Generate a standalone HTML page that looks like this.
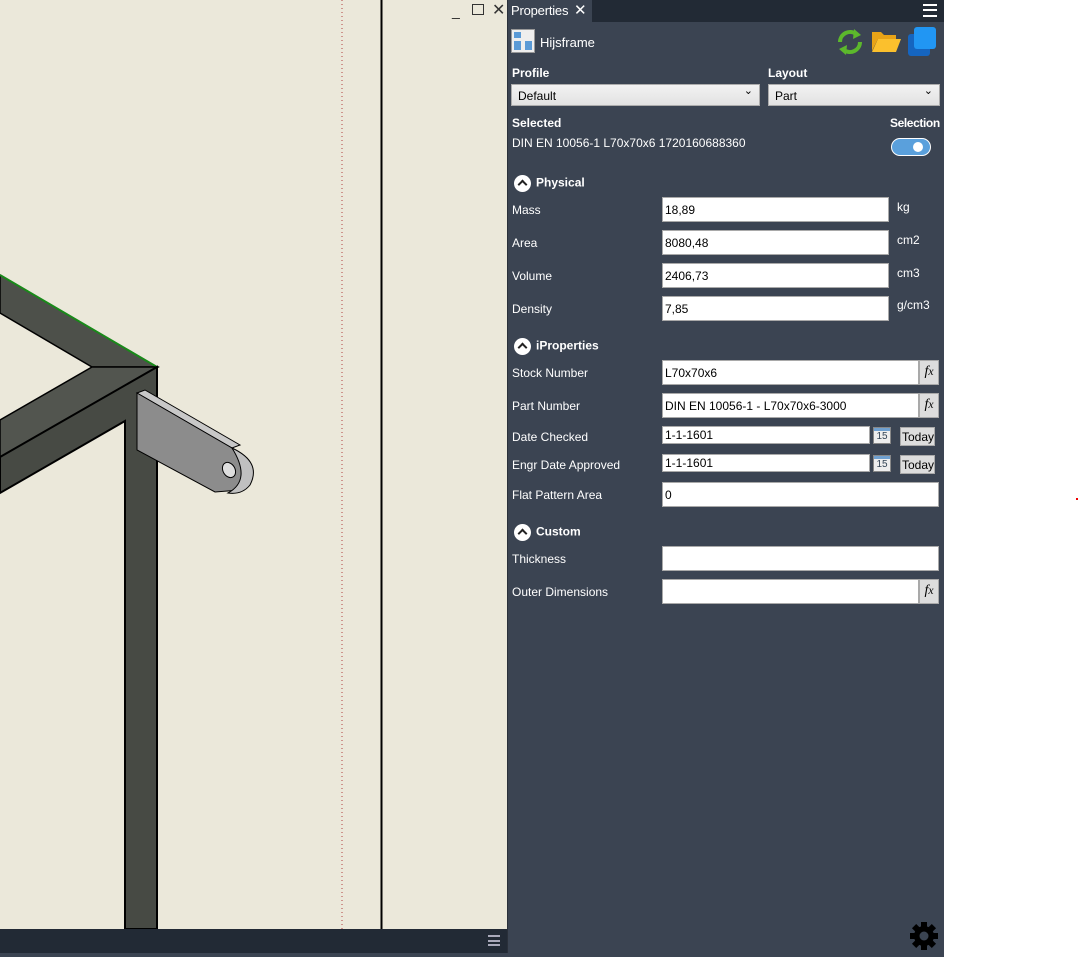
<!DOCTYPE html>
<html><head><meta charset="utf-8"><style>
*{margin:0;padding:0;box-sizing:border-box}
body{width:1080px;height:957px;position:relative;background:#fff;font-family:"Liberation Sans",sans-serif;overflow:hidden}
.a{position:absolute}
.lbl{position:absolute;color:#fff;font-size:12px;left:512px}
.b{font-weight:bold}
.inp{position:absolute;background:#fff;border:1px solid #a9a9a9;height:25px;font-size:12px;color:#000;padding:6px 0 0 2px;line-height:12px}
.unit{position:absolute;color:#fff;font-size:12px;left:897px}
.fx{position:absolute;left:919px;width:20px;height:25px;background:#ddd;border:1px solid #a9a9a9;font-family:"Liberation Serif",serif;font-style:italic;font-size:14px;text-align:center;line-height:22px;color:#000}
.sec{position:absolute;left:514px;color:#fff;font-size:12px;font-weight:bold}
.sec i{display:inline-block;width:17px;height:17px;border-radius:50%;background:#fff;vertical-align:middle;margin-right:5px;position:relative}
.sec i:after{content:"";position:absolute;left:5px;top:6px;width:5px;height:5px;border-left:2px solid #222;border-top:2px solid #222;transform:rotate(45deg)}
.dd{position:absolute;height:22px;background:linear-gradient(#f2f2f2,#e2e2e2);border:1px solid #acacac;font-size:12px;padding:4px 0 0 6px;color:#000}
.dd:after{content:"⌄";position:absolute;right:6px;top:-1px;font-size:11px}
.today{position:absolute;left:900px;width:35px;height:19px;background:#ddd;border:1px solid #aaa;font-size:12px;color:#000;padding:2px 0 0 1px}
.cal{position:absolute;left:873px;width:18px;height:17px;background:#eee;border:1px solid #888;font-size:10px;text-align:center;color:#345;line-height:17px}
.cal:before{content:"";position:absolute;left:0;right:0;top:0;height:3px;background:#6fa0d0}
</style></head><body>
<div class="a" style="left:0;top:0;width:507px;height:929px;background:#ebe8da"></div>
<svg class="a" style="left:0;top:0" width="507" height="929">
<line x1="342" y1="0" x2="342" y2="929" stroke="#b04040" stroke-dasharray="1 3" stroke-width="1"/>
<line x1="381.5" y1="0" x2="381.5" y2="929" stroke="#000" stroke-width="2"/>
<polygon points="0,275 157,367 92,367 0,313" fill="#4d504a" stroke="#000" stroke-width="1.5"/>
<line x1="0" y1="275" x2="157" y2="367" stroke="#1a8a1a" stroke-width="2"/>
<polygon points="92,367 157,367 0,457 0,420" fill="#52554f" stroke="#000" stroke-width="1.5"/>
<polygon points="157,367 0,457 0,493 125,421 125,929 157,929" fill="#474a44" stroke="#000" stroke-width="2"/>
<line x1="125" y1="421" x2="125" y2="929" stroke="#000" stroke-width="2"/>
<polygon points="137,393 145,390 240,445 232,448" fill="#c8c8c8" stroke="#000"/>
<polygon points="137,393 232,448 250,470 240,490 215,492 137,450" fill="#8c8c8c" stroke="#000"/>
<path d="M232,448 Q262,462 250,485 Q242,495 228,493 Q252,480 232,448Z" fill="#c0c0c0" stroke="#000"/>
<ellipse cx="229" cy="470" rx="6" ry="8" transform="rotate(-30 229 470)" fill="#ddd" stroke="#000"/>
</svg>
<div class="a" style="left:452px;top:3px;color:#222;font-size:14px">_</div>
<div class="a" style="left:472px;top:4px;width:12px;height:11px;border:1.5px solid #333"></div>
<div class="a" style="left:492px;top:0;color:#333;font-size:16px">✕</div>
<div class="a" style="left:0;top:929px;width:507px;height:24px;background:#222a35"></div>
<div class="a" style="left:488px;top:935px;width:12px;height:11px;border-top:2px solid #aab;border-bottom:2px solid #aab"></div>
<div class="a" style="left:488px;top:940px;width:12px;height:2px;background:#aab"></div>
<div class="a" style="left:0;top:953px;width:944px;height:4px;background:#3b4452"></div>
<div class="a" style="left:507px;top:0;width:437px;height:953px;background:#3b4452;border-left:1px solid #2a303a"></div>
<div class="a" style="left:592px;top:0;width:352px;height:22px;background:#222a35"></div>
<div class="a" style="left:511px;top:3px;color:#fff;font-size:13px;letter-spacing:-0.2px">Properties</div>
<div class="a" style="left:574px;top:1px;color:#fff;font-size:15px">✕</div>
<div class="a" style="left:923px;top:4px;width:14px;height:13px;border-top:2px solid #fff;border-bottom:2px solid #fff"></div>
<div class="a" style="left:923px;top:9px;width:14px;height:2px;background:#fff"></div>
<div class="a" style="left:511px;top:29px;width:24px;height:24px;background:#eee;border:1px solid #999"></div>
<div class="a" style="left:514px;top:32px;width:7px;height:6px;background:#5a9ad6"></div>
<div class="a" style="left:514px;top:41px;width:7px;height:9px;background:#5a9ad6"></div>
<div class="a" style="left:525px;top:41px;width:7px;height:9px;background:#5a9ad6"></div>
<div class="a" style="left:540px;top:35px;color:#fff;font-size:13px">Hijsframe</div>
<svg class="a" style="left:836px;top:28px" width="28" height="28"><path d="M4,14 A10,10 0 0 1 20,6" stroke="#5cb82c" stroke-width="4" fill="none"/><path d="M24,14 A10,10 0 0 1 8,22" stroke="#5cb82c" stroke-width="4" fill="none"/><polygon points="18,1 25,7 17,11" fill="#5cb82c"/><polygon points="10,27 3,21 11,17" fill="#5cb82c"/></svg>
<svg class="a" style="left:871px;top:29px" width="30" height="24"><path d="M1,3 h9 l3,3 h12 v4 H7 L1,22Z" fill="#e8a317"/><path d="M7,10 H30 L25,23 H1Z" fill="#fbc02d"/></svg>
<div class="a" style="left:908px;top:34px;width:22px;height:22px;background:#1565c0;border-radius:3px"></div>
<div class="a" style="left:914px;top:27px;width:22px;height:22px;background:#2196f3;border-radius:3px"></div>
<div class="lbl b" style="top:66px">Profile</div>
<div class="a b" style="left:768px;top:66px;color:#fff;font-size:12px">Layout</div>
<div class="dd" style="left:511px;top:84px;width:249px">Default</div>
<div class="dd" style="left:768px;top:84px;width:172px">Part</div>
<div class="lbl b" style="top:116px">Selected</div>
<div class="a b" style="left:890px;top:116px;color:#fff;font-size:12px;letter-spacing:-0.4px">Selection</div>
<div class="lbl" style="top:136px">DIN EN 10056-1 L70x70x6 1720160688360</div>
<div class="a" style="left:891px;top:138px;width:40px;height:18px;border-radius:9px;background:#5aa0dc;border:1.5px solid #fff"></div>
<div class="a" style="left:913px;top:142px;width:10px;height:10px;border-radius:50%;background:#fff"></div>
<div class="sec" style="top:175px"><i></i>Physical</div>
<div class="lbl" style="top:203px">Mass</div>
<div class="inp" style="left:662px;top:197px;width:227px">18,89</div><div class="unit" style="top:200px">kg</div>
<div class="lbl" style="top:236px">Area</div>
<div class="inp" style="left:662px;top:230px;width:227px">8080,48</div><div class="unit" style="top:233px">cm2</div>
<div class="lbl" style="top:269px">Volume</div>
<div class="inp" style="left:662px;top:263px;width:227px">2406,73</div><div class="unit" style="top:266px">cm3</div>
<div class="lbl" style="top:302px">Density</div>
<div class="inp" style="left:662px;top:296px;width:227px">7,85</div><div class="unit" style="top:298px">g/cm3</div>
<div class="sec" style="top:338px"><i></i>iProperties</div>
<div class="lbl" style="top:366px">Stock Number</div>
<div class="inp" style="left:662px;top:360px;width:257px">L70x70x6</div><div class="fx" style="top:360px">f<small>x</small></div>
<div class="lbl" style="top:399px">Part Number</div>
<div class="inp" style="left:662px;top:393px;width:257px">DIN EN 10056-1 - L70x70x6-3000</div><div class="fx" style="top:393px">f<small>x</small></div>
<div class="lbl" style="top:430px">Date Checked</div>
<div class="inp" style="left:662px;top:426px;width:208px;height:18px;padding-top:2px">1-1-1601</div><div class="cal" style="top:427px">15</div><div class="today" style="top:427px">Today</div>
<div class="lbl" style="top:458px">Engr Date Approved</div>
<div class="inp" style="left:662px;top:454px;width:208px;height:18px;padding-top:2px">1-1-1601</div><div class="cal" style="top:455px">15</div><div class="today" style="top:455px">Today</div>
<div class="lbl" style="top:488px">Flat Pattern Area</div>
<div class="inp" style="left:662px;top:482px;width:277px">0</div>
<div class="sec" style="top:524px"><i></i>Custom</div>
<div class="lbl" style="top:552px">Thickness</div>
<div class="inp" style="left:662px;top:546px;width:277px"></div>
<div class="lbl" style="top:585px">Outer Dimensions</div>
<div class="inp" style="left:662px;top:579px;width:257px"></div><div class="fx" style="top:579px">f<small>x</small></div>
<svg class="a" style="left:909px;top:921px" width="30" height="30" viewBox="0 0 30 30">
<g fill="#000"><circle cx="15" cy="15" r="10"/>
<rect x="12" y="1" width="6" height="28"/><rect x="1" y="12" width="28" height="6"/>
<rect x="12" y="1" width="6" height="28" transform="rotate(45 15 15)"/><rect x="12" y="1" width="6" height="28" transform="rotate(-45 15 15)"/></g>
<circle cx="15" cy="15" r="4.5" fill="#3b4452"/></svg>
<div class="a" style="left:1076px;top:498px;width:2px;height:2px;background:#e00"></div>
</body></html>
